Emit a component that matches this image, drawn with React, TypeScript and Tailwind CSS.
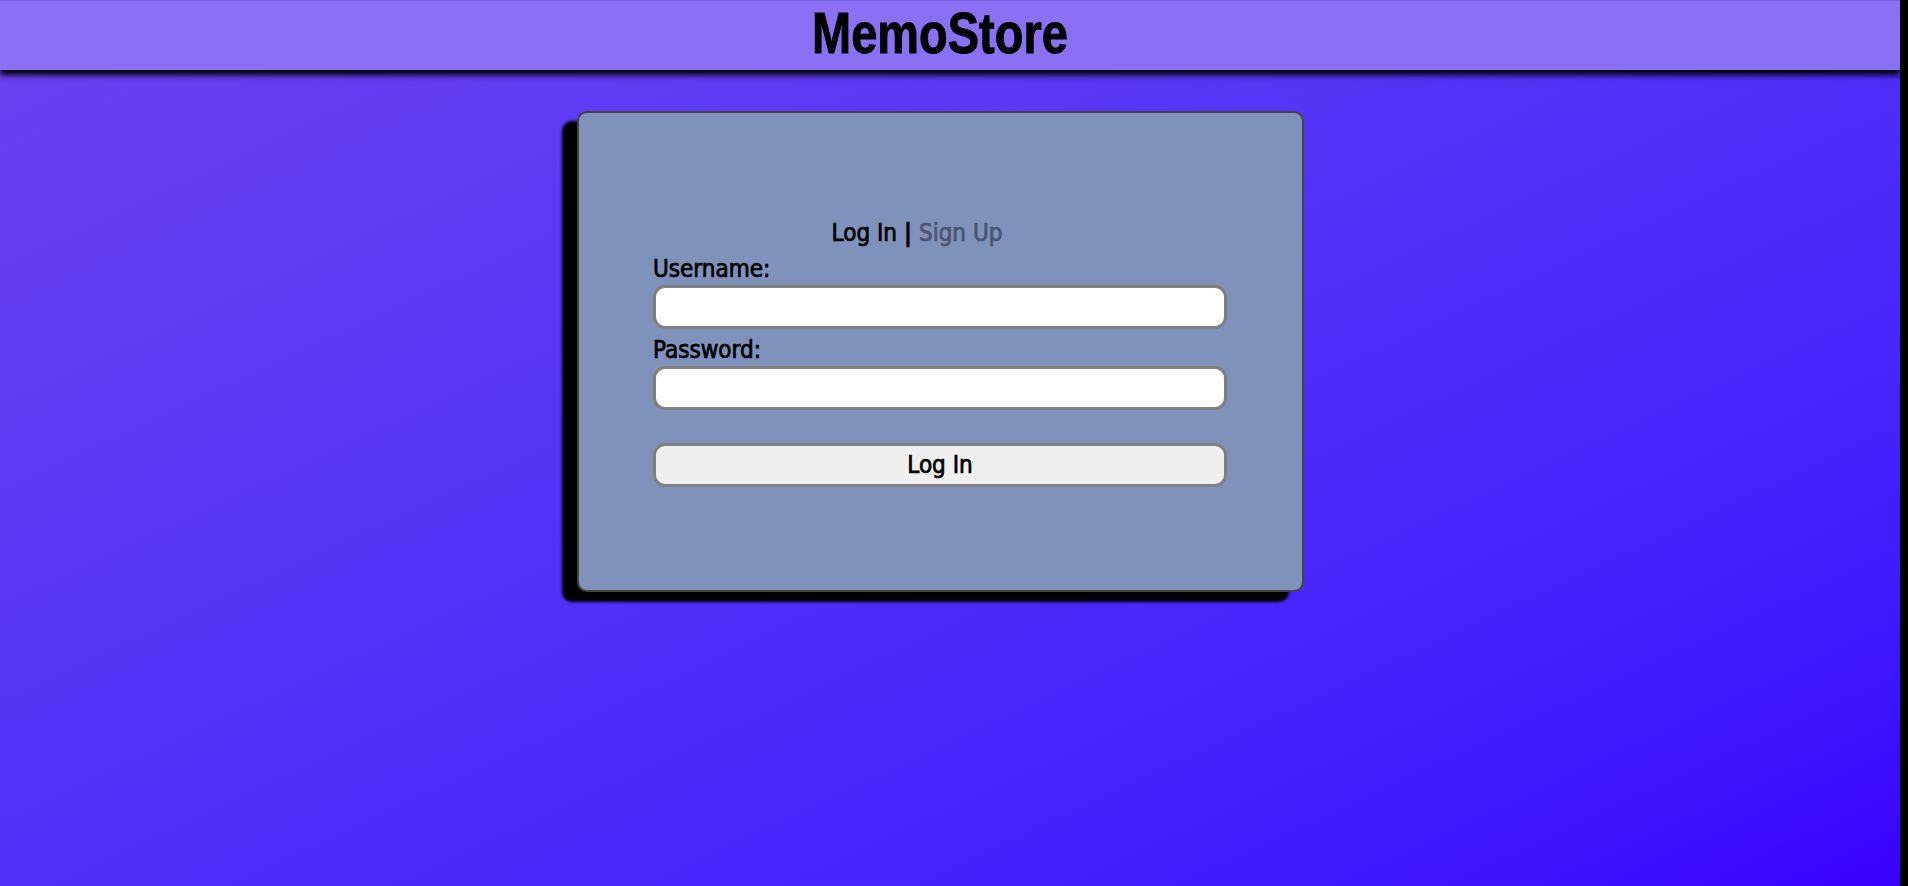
import { useState } from "react";

const textFont =
  "font-['DejaVu_Sans_Condensed','DejaVu_Sans',sans-serif] [font-stretch:condensed] [-webkit-text-stroke:0.7px_currentColor]";

export default function App() {
  const [tab, setTab] = useState<"login" | "signup">("login");
  const [username, setUsername] = useState("");
  const [password, setPassword] = useState("");

  return (
    <div className="flex min-h-screen w-full bg-black">
      <div className="h-[886px] w-[1900px] overflow-hidden bg-linear-to-br from-[#6a42ef] to-[#3800ff]">
        {/* Header */}
        <header className="relative z-10 flex h-[70px] justify-center border-t border-[#7763dc] bg-[#8b70f4] pr-[20px] shadow-[0_5px_6px_#000]">
          <h1 className="inline-block h-[64px] origin-center scale-x-[0.81] font-['Liberation_Sans',sans-serif] text-[58px] font-bold leading-[64px] text-black [-webkit-text-stroke:1px_#000]">
            MemoStore
          </h1>
        </header>

        <main className="flex justify-center pr-[20px] pt-[41px]">
          <div className="flex h-[481px] w-[727px] flex-col justify-center rounded-[10px] border-2 border-[#444] bg-[#7f92bb] shadow-[-15px_10px_3px_#000]">
            <form
              className={`mx-auto flex w-[574px] flex-col ${textFont}`}
              onSubmit={(e) => e.preventDefault()}
            >
              <div className="flex justify-center pt-[3px] pr-[46px] text-[24px] leading-[28px]">
                <button
                  type="button"
                  onClick={() => setTab("login")}
                  className={tab === "login" ? "text-black" : "text-[#4c5472]"}
                >
                  Log In
                </button>
                <span className="px-[7px] font-bold text-black">|</span>
                <button
                  type="button"
                  onClick={() => setTab("signup")}
                  className={tab === "signup" ? "text-black" : "text-[#4c5472]"}
                >
                  Sign Up
                </button>
              </div>

              <label className="mt-[8px] text-[24px] leading-[28px] text-black">Username:</label>
              <input
                value={username}
                onChange={(e) => setUsername(e.target.value)}
                className="mt-[2px] h-[44px] w-full rounded-[12px] border-[3px] border-[#808080] bg-white px-3 text-[20px] outline-none [-webkit-text-stroke:0]"
              />

              <label className="mt-[7px] text-[24px] leading-[28px] text-black">Password:</label>
              <input
                type="password"
                value={password}
                onChange={(e) => setPassword(e.target.value)}
                className="mt-[2px] h-[44px] w-full rounded-[12px] border-[3px] border-[#808080] bg-white px-3 text-[20px] outline-none [-webkit-text-stroke:0]"
              />

              <button
                type="submit"
                className="mt-[33px] h-[44px] w-full rounded-[12px] border-[3px] border-[#808080] bg-[#efefef] text-[24px] leading-none text-black"
              >
                {tab === "login" ? "Log In" : "Sign Up"}
              </button>
            </form>
          </div>
        </main>
      </div>
    </div>
  );
}
